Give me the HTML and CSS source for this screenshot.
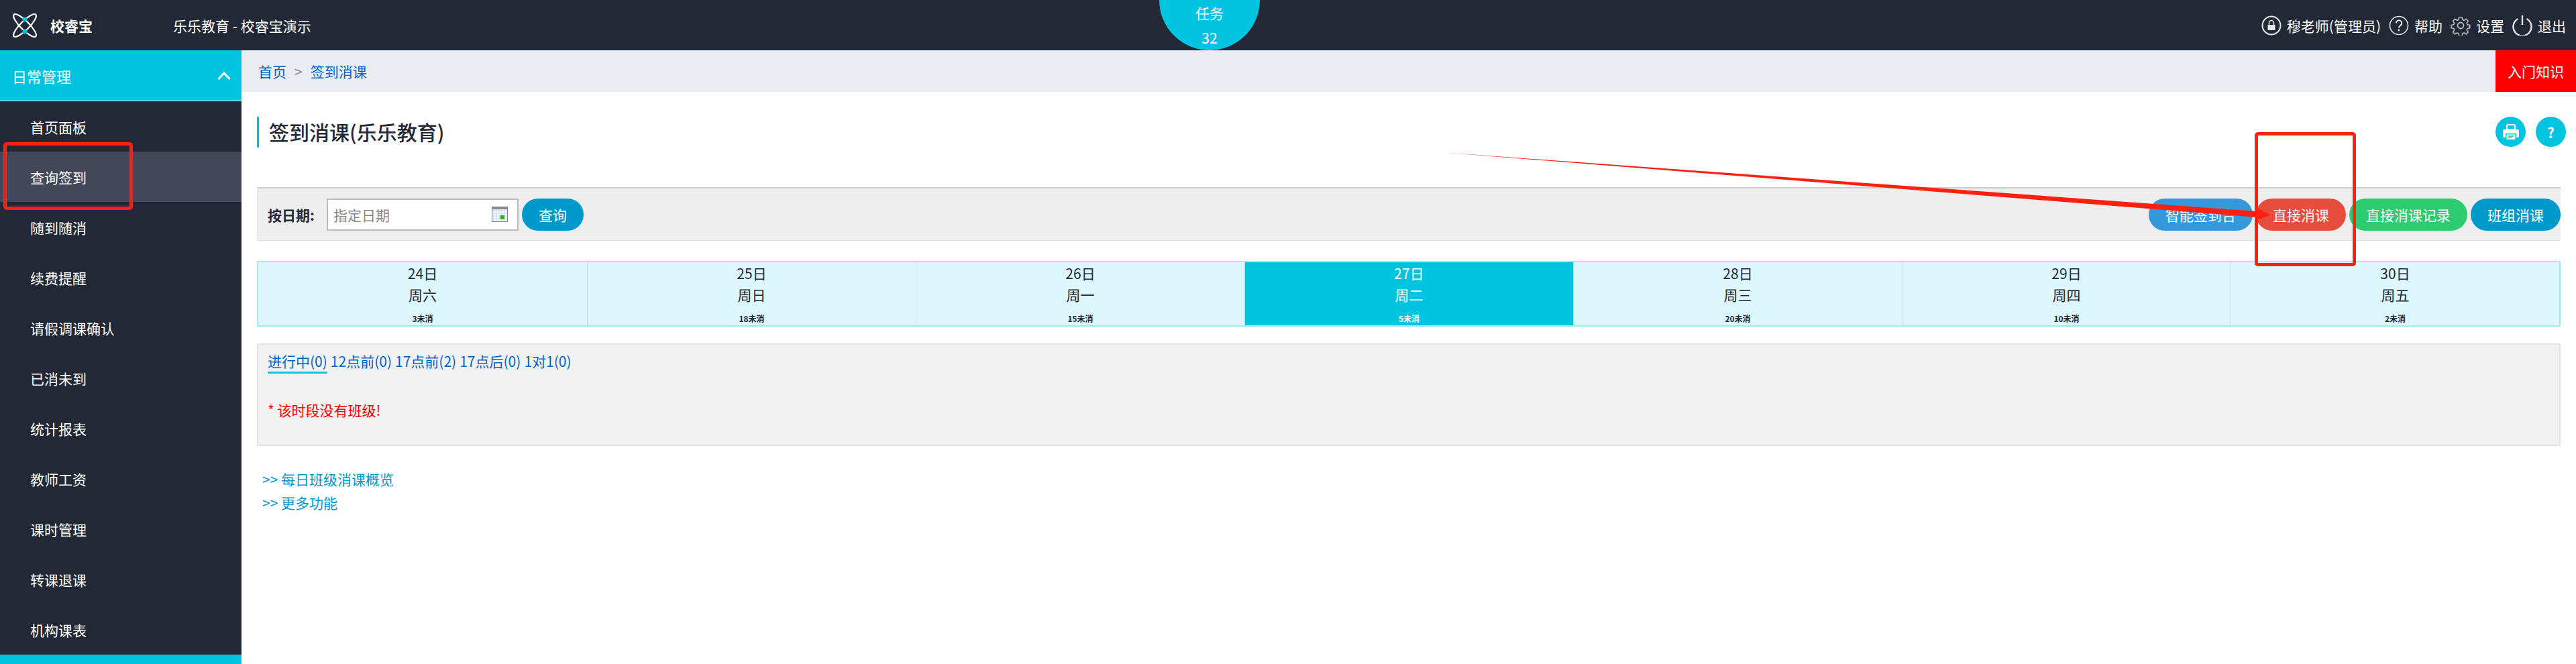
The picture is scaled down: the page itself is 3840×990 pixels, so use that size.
FILE: index.html
```html
<!DOCTYPE html>
<html lang="zh-CN">
<head>
    <meta charset="UTF-8">
    <title>签到消课 | 校睿宝</title>
    <link rel="stylesheet" href="styles.css">
</head>
<body>
<div class="page">
    <!-- Top bar -->
    <header class="topbar">
        <div class="logo">
            <svg class="logo-icon" viewBox="0 0 36 38">
                <g fill="none" stroke="#fff" stroke-width="2.200">
                    <ellipse cx="18" cy="19" rx="6.500" ry="23" transform="rotate(-45 18 19)"/>
                    <ellipse cx="18" cy="19" rx="6.500" ry="23" transform="rotate(45 18 19)"/>
                </g>
                <circle cx="18" cy="10" r="3.400" fill="#00c4e0"/>
                <circle cx="18" cy="28" r="3.400" fill="#00c4e0"/>
            </svg>
            <span class="logo-name">校睿宝</span>
        </div>
        <div class="org-name">乐乐教育 - 校睿宝演示</div>
        <div class="user-menu">
            <span class="user-item">
                <svg class="top-icon" viewBox="0 0 30 30">
                    <circle cx="15" cy="15" r="13.500" fill="none" stroke="#e6e6e6" stroke-width="2"/>
                    <path d="M11.500 14v-3a3.500 3.500 0 0 1 7 0v3" fill="none" stroke="#e6e6e6" stroke-width="1.600"/>
                    <rect x="9.500" y="14" width="11" height="8" fill="#e6e6e6"/>
                </svg>
                穆老师(管理员)
            </span>
            <span class="user-item">
                <svg class="top-icon" viewBox="0 0 30 30">
                    <circle cx="15" cy="15" r="13.500" fill="none" stroke="#e6e6e6" stroke-width="1.600"/>
                    <path d="M10.800 11.500a4.200 4.200 0 1 1 6.600 3.400c-1.600 1.100-2.400 1.800-2.400 3.600" fill="none" stroke="#e6e6e6" stroke-width="2"/>
                    <circle cx="15" cy="22" r="1.400" fill="#e6e6e6"/>
                </svg>
                帮助
            </span>
            <span class="user-item">
                <svg class="top-icon" viewBox="0 0 30 30">
                    <path d="M12.600 1.500h4.800l.8 4 2.600 1.100 3.400-2.300 3.400 3.400-2.300 3.400 1.100 2.600 4 .8v4.800l-4 .8-1.100 2.600 2.300 3.400-3.400 3.400-3.400-2.300-2.600 1.100-.8 4h-4.800l-.8-4-2.600-1.100-3.400 2.300-3.400-3.400 2.300-3.400-1.100-2.600-4-.8v-4.800l4-.8 1.100-2.600-2.300-3.400 3.400-3.400 3.400 2.300 2.600-1.100z" transform="translate(1.400 1.400) scale(.9)" fill="none" stroke="#bbb" stroke-width="1.800"/>
                    <circle cx="15" cy="15" r="4.500" fill="none" stroke="#bbb" stroke-width="1.800"/>
                </svg>
                设置
            </span>
            <span class="user-item">
                <svg class="top-icon" viewBox="0 0 30 30">
                    <path d="M8.500 5a13.500 13.500 0 1 0 13 0" fill="none" stroke="#e6e6e6" stroke-width="2.400"/>
                    <path d="M15 0v14" fill="none" stroke="#e6e6e6" stroke-width="2.400"/>
                </svg>
                退出
            </span>
        </div>
    </header>

    <!-- Task bubble hanging from the top bar -->
    <div class="task-bubble">
        <span>任务</span>
        <span>32</span>
    </div>

    <div class="layout">
        <!-- Sidebar -->
        <nav class="sidebar">
            <div class="side-head">
                日常管理
                <svg class="side-arrow" viewBox="0 0 20 14">
                    <path d="M1.500 12L10 3l8.500 9" fill="none" stroke="#fff" stroke-width="3"/>
                </svg>
            </div>
            <a class="side-item">首页面板</a>
            <a class="side-item active">查询签到</a>
            <a class="side-item">随到随消</a>
            <a class="side-item">续费提醒</a>
            <a class="side-item">请假调课确认</a>
            <a class="side-item">已消未到</a>
            <a class="side-item">统计报表</a>
            <a class="side-item">教师工资</a>
            <a class="side-item">课时管理</a>
            <a class="side-item">转课退课</a>
            <a class="side-item">机构课表</a>
            <div class="side-head side-next"></div>
        </nav>

        <!-- Main content -->
        <main class="content">
            <div class="breadcrumb">
                <div class="crumbs">
                    <a>首页</a>
                    <span class="crumb-sep">&gt;</span>
                    <a>签到消课</a>
                </div>
                <div class="intro-btn">入门知识</div>
            </div>

            <div class="body-wrap">
                <div class="title-row">
                    <h2 class="page-title">签到消课(乐乐教育)</h2>
                    <div class="round-btns">
                        <span class="round-btn">
                            <svg class="print-icon" viewBox="0 0 26 26">
                                <path d="M7 9V3.500A1.500 1.500 0 0 1 8.500 2h9A1.500 1.500 0 0 1 19 3.500V9z" fill="none" stroke="#fff" stroke-width="2"/>
                                <path d="M3 9h20a2 2 0 0 1 2 2v8a2 2 0 0 1-2 2h-2v-6H5v6H3a2 2 0 0 1-2-2v-8a2 2 0 0 1 2-2z" fill="#fff"/>
                                <path d="M6.500 16.500h13V23a1 1 0 0 1-1 1h-11a1 1 0 0 1-1-1z" fill="#fff"/>
                                <path d="M9 19h8M9 21.500h5" stroke="#00c4e0" stroke-width="1.300"/>
                            </svg>
                        </span>
                        <span class="round-btn round-help">?</span>
                    </div>
                </div>

                <div class="filter-bar">
                    <label class="filter-label">按日期:</label>
                    <div class="date-input">
                        <span class="date-hint">指定日期</span>
                        <svg class="cal-icon" viewBox="0 0 24 23">
                            <rect width="24" height="23" fill="#8a8a8a"/>
                            <rect x="1" y="4" width="22" height="18" fill="#cfdcf7"/>
                            <path d="M1 8h22M1 12h22M1 16h22M1 20h22M5 4v18M9 4v18M13 4v18M17 4v18M21 4v18" stroke="#fff"/>
                            <rect x="13" y="13" width="6" height="6" fill="#3aa81a"/>
                        </svg>
                    </div>
                    <button class="pill pill-query">查询</button>
                    <div class="filter-actions">
                        <button class="pill pill-blue">智能签到台</button>
                        <button class="pill pill-red">直接消课</button>
                        <button class="pill pill-green">直接消课记录</button>
                        <button class="pill pill-query">班组消课</button>
                    </div>
                </div>

                <div class="week">
                    <div class="day"><span>24日</span><span>周六</span><small>3未消</small></div>
                    <div class="day"><span>25日</span><span>周日</span><small>18未消</small></div>
                    <div class="day"><span>26日</span><span>周一</span><small>15未消</small></div>
                    <div class="day today"><span>27日</span><span>周二</span><small>5未消</small></div>
                    <div class="day"><span>28日</span><span>周三</span><small>20未消</small></div>
                    <div class="day"><span>29日</span><span>周四</span><small>10未消</small></div>
                    <div class="day"><span>30日</span><span>周五</span><small>2未消</small></div>
                </div>

                <div class="class-panel">
                    <div class="tabs">
                        <a class="tab current">进行中(0)</a>
                        <a class="tab">12点前(0)</a>
                        <a class="tab">17点前(2)</a>
                        <a class="tab">17点后(0)</a>
                        <a class="tab">1对1(0)</a>
                    </div>
                    <p class="empty-msg">* 该时段没有班级!</p>
                </div>

                <div class="more-links">
                    <a>&gt;&gt; 每日班级消课概览</a>
                    <a>&gt;&gt; 更多功能</a>
                </div>
            </div>
        </main>
    </div>

    <!-- Red marks drawn over the screenshot -->
    <div class="mark mark-menu"></div>
    <div class="mark mark-btn"></div>
    <svg class="mark-arrow" viewBox="0 0 1260 120">
        <path d="M8 12L1224 100v-6l20 11.500-22 8.500 2-5z" fill="#ff2010"/>
    </svg>
</div>
</body>
</html>
```

FILE: styles.css
```css
* {
    box-sizing: border-box;
}
html, body {
    margin: 0;
    padding: 0;
}
body {
    font-family: "Noto Sans CJK SC", "Noto Sans", sans-serif;
    font-size: 21px;
    color: #222835;
    background-color: #fff;
}
a {
    color: #0066cc;
    text-decoration: none;
}
.page {
    position: relative;
    width: 3840px;
    height: 990px;
    overflow: hidden;
}

/* Top bar */
.topbar {
    height: 75px;
    background-color: #222835;
    color: #fff;
    display: flex;
    align-items: center;
    padding: 0 15px 0 19px;
}
.logo {
    display: flex;
    align-items: center;
    gap: 20px;
    width: 239px;
}
.logo-icon {
    width: 36px;
    height: 38px;
    overflow: visible;
}
.logo-name {
    font-weight: bold;
}
.user-menu {
    margin-left: auto;
    display: flex;
    gap: 12px;
}
.user-item {
    display: flex;
    align-items: center;
    gap: 8px;
}
.top-icon {
    width: 30px;
    height: 30px;
}

/* Task bubble */
.task-bubble {
    position: absolute;
    left: 1728px;
    top: 0;
    width: 150px;
    height: 75px;
    border-radius: 0 0 75px 75px;
    background-color: #00c4e0;
    color: #fff;
    display: flex;
    flex-direction: column;
    align-items: center;
    line-height: 37px;
    padding-top: 1px;
}

/* Layout */
.layout {
    display: flex;
    height: 915px;
}
.sidebar {
    width: 360px;
    background-color: #222835;
    overflow: hidden;
    flex-shrink: 0;
}
.side-head {
    height: 75px;
    background-color: #00c4e0;
    color: #fff;
    font-size: 22px;
    display: flex;
    align-items: center;
    justify-content: space-between;
    padding: 0 16px 0 18px;
    margin-bottom: 1px;
    box-shadow: 0 1px 0 #fff;
}
.side-arrow {
    width: 20px;
    height: 14px;
}
.side-item {
    display: flex;
    align-items: center;
    height: 75px;
    padding-left: 45px;
    color: #fff;
}
.side-item.active {
    background-color: #434759;
}

/* Content */
.content {
    flex: 1;
    min-width: 0;
}
.breadcrumb {
    height: 62px;
    background-color: #e9ecf1;
    display: flex;
    align-items: center;
    justify-content: space-between;
    padding-left: 25px;
}
.crumbs {
    display: flex;
    gap: 12px;
    color: #888;
}
.intro-btn {
    width: 120px;
    height: 62px;
    background-color: #f00;
    color: #fff;
    display: flex;
    align-items: center;
    justify-content: center;
}
.body-wrap {
    padding: 37px 23px 0;
}
.title-row {
    display: flex;
    justify-content: space-between;
    height: 105px;
}
.page-title {
    margin: 0;
    height: 46px;
    font-size: 30px;
    font-weight: 500;
    line-height: 44px;
    padding-left: 15px;
    border-left: 3px solid #00c4e0;
}
.round-btns {
    display: flex;
    gap: 15px;
    margin-right: -8px;
}
.round-btn {
    width: 45px;
    height: 45px;
    border-radius: 50%;
    background-color: #00c4e0;
    color: #fff;
    font-weight: bold;
    display: flex;
    align-items: center;
    justify-content: center;
}
.print-icon {
    width: 26px;
    height: 26px;
}

/* Filter bar */
.filter-bar {
    height: 80px;
    background-color: #eee;
    border-top: 2px solid #ccc;
    border-bottom: 1px solid #dfe3e8;
    border-left: 1px solid #dfe3e8;
    display: flex;
    align-items: center;
    padding-left: 15px;
}
.filter-label {
    font-weight: bold;
    width: 88px;
}
.date-input {
    width: 286px;
    height: 48px;
    background-color: #fff;
    border: 2px solid #bbb;
    display: flex;
    align-items: center;
    justify-content: space-between;
    padding: 0 14px 0 8px;
    color: #888;
}
.cal-icon {
    width: 24px;
    height: 23px;
}
.pill {
    height: 48px;
    border: none;
    border-radius: 24px;
    color: #fff;
    font-family: inherit;
    font-size: 21px;
    padding: 0 25px;
}
.pill-query {
    background-color: #0099cc;
    margin-left: 5px;
}
.filter-actions {
    margin-left: auto;
    display: flex;
    gap: 5px;
}
.filter-actions .pill-query {
    margin-left: 0;
}
.pill-blue {
    background-color: #3498db;
}
.pill-red {
    background-color: #e74c3c;
}
.pill-green {
    background-color: #2ecc71;
}

/* Week strip */
.week {
    display: grid;
    grid-template-columns: repeat(7, 1fr);
    height: 98px;
    margin-top: 30px;
    border: 2px solid #a8e6f0;
    background-color: #dcf7fd;
}
.day {
    display: flex;
    flex-direction: column;
    align-items: center;
    line-height: 32px;
    border-left: 1px solid #a8e6f0;
}
.day:first-child {
    border-left: none;
}
.day small {
    font-size: 12px;
    font-weight: bold;
    line-height: 20px;
    margin-top: 10px;
}
.day.today {
    background-color: #00c4e0;
    color: #fff;
}

/* Class panel */
.class-panel {
    height: 153px;
    margin-top: 25px;
    background-color: #f1f1f1;
    border: 2px solid #e3e3e3;
    padding: 8px 14px 0;
}
.tabs {
    display: flex;
    gap: 5px;
}
.tab {
    height: 35px;
    line-height: 32px;
}
.tab.current {
    border-bottom: 3px solid #00c4e0;
}
.empty-msg {
    margin: 38px 0 0;
    color: #f00;
    line-height: 32px;
}

/* Links */
.more-links {
    display: flex;
    flex-direction: column;
    margin-top: 32px;
    padding-left: 8px;
    line-height: 35px;
}
.more-links a {
    color: #0099cc;
}

/* Annotations */
.mark {
    position: absolute;
    border: 5px solid #ff2010;
    border-radius: 5px;
}
.mark-menu {
    left: 5px;
    top: 212px;
    width: 193px;
    height: 101px;
}
.mark-btn {
    left: 3361px;
    top: 197px;
    width: 151px;
    height: 200px;
}
.mark-arrow {
    position: absolute;
    left: 2140px;
    top: 215px;
    width: 1260px;
    height: 120px;
}
```
